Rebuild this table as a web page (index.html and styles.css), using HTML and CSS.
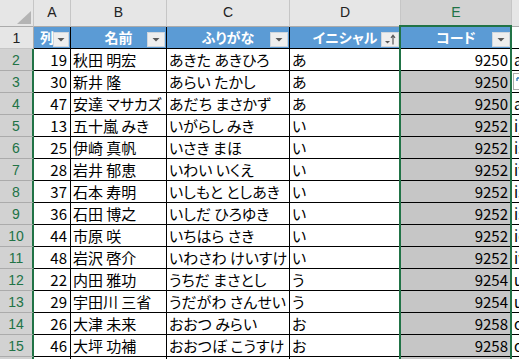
FILE: index.html
```html
<!DOCTYPE html>
<html lang="ja">
<head>
<meta charset="utf-8">
<title>Sheet</title>
<link rel="stylesheet" href="styles.css">
</head>
<body>
<div class="sheet">
  <div class="corner"><span class="tri"></span></div>
  <div class="ch">A</div>
  <div class="ch">B</div>
  <div class="ch">C</div>
  <div class="ch">D</div>
  <div class="ch sel">E</div>
  <div class="ch">F</div>

  <div class="rh">1</div>
  <div class="th th-a">列<span class="fb"><svg width="14" height="15" viewBox="0 0 14 15"><polygon points="3.5,6 10.5,6 7,9.5" fill="#595959"/></svg></span></div>
  <div class="th">名前<span class="fb"><svg width="16" height="15" viewBox="0 0 16 15"><polygon points="4.5,6 11.5,6 8,9.5" fill="#595959"/></svg></span></div>
  <div class="th">ふりがな<span class="fb"><svg width="16" height="15" viewBox="0 0 16 15"><polygon points="4.5,6 11.5,6 8,9.5" fill="#595959"/></svg></span></div>
  <div class="th">イニシャル<span class="fb"><svg width="16" height="15" viewBox="0 0 16 15"><polygon points="3,9 8,9 5.5,11.5" fill="#595959"/><path d="M11 12.5V3.5M9 5.8L11 3.2L13 5.8" stroke="#595959" stroke-width="1.2" fill="none"/></svg></span></div>
  <div class="th">コード<span class="fb"><svg width="16" height="15" viewBox="0 0 16 15"><polygon points="4.5,6 11.5,6 8,9.5" fill="#595959"/></svg></span></div>
  <div class="fx"></div>

  <div class="rh on">2</div><div class="td num">19</div><div class="td">秋田 明宏</div><div class="td">あきた あきひろ</div><div class="td">あ</div><div class="td num act">9250</div><div class="fx">a</div>
  <div class="rh on">3</div><div class="td num">30</div><div class="td">新井 隆</div><div class="td">あらい たかし</div><div class="td">あ</div><div class="td num hl">9250</div><div class="fx"><span class="ff"><svg width="8" height="16" viewBox="0 0 8 16"><path d="M3 4H7M3 4V7" stroke="#2e75b6" stroke-width="1.3" fill="none"/></svg></span></div>
  <div class="rh on">4</div><div class="td num">47</div><div class="td">安達 マサカズ</div><div class="td">あだち まさかず</div><div class="td">あ</div><div class="td num hl">9250</div><div class="fx">a</div>
  <div class="rh on">5</div><div class="td num">13</div><div class="td">五十嵐 みき</div><div class="td">いがらし みき</div><div class="td">い</div><div class="td num hl">9252</div><div class="fx">ig</div>
  <div class="rh on">6</div><div class="td num">25</div><div class="td">伊崎 真帆</div><div class="td">いさき まほ</div><div class="td">い</div><div class="td num hl">9252</div><div class="fx">is</div>
  <div class="rh on">7</div><div class="td num">28</div><div class="td">岩井 郁恵</div><div class="td">いわい いくえ</div><div class="td">い</div><div class="td num hl">9252</div><div class="fx">iw</div>
  <div class="rh on">8</div><div class="td num">37</div><div class="td">石本 寿明</div><div class="td">いしもと としあき</div><div class="td">い</div><div class="td num hl">9252</div><div class="fx">is</div>
  <div class="rh on">9</div><div class="td num">36</div><div class="td">石田 博之</div><div class="td">いしだ ひろゆき</div><div class="td">い</div><div class="td num hl">9252</div><div class="fx">is</div>
  <div class="rh on">10</div><div class="td num">44</div><div class="td">市原 咲</div><div class="td">いちはら さき</div><div class="td">い</div><div class="td num hl">9252</div><div class="fx">ic</div>
  <div class="rh on">11</div><div class="td num">48</div><div class="td">岩沢 啓介</div><div class="td">いわさわ けいすけ</div><div class="td">い</div><div class="td num hl">9252</div><div class="fx">iw</div>
  <div class="rh on">12</div><div class="td num">22</div><div class="td">内田 雅功</div><div class="td">うちだ まさとし</div><div class="td">う</div><div class="td num hl">9254</div><div class="fx">u</div>
  <div class="rh on">13</div><div class="td num">29</div><div class="td">宇田川 三省</div><div class="td">うだがわ さんせい</div><div class="td">う</div><div class="td num hl">9254</div><div class="fx">u</div>
  <div class="rh on">14</div><div class="td num">26</div><div class="td">大津 未来</div><div class="td">おおつ みらい</div><div class="td">お</div><div class="td num hl">9258</div><div class="fx">o</div>
  <div class="rh on">15</div><div class="td num">46</div><div class="td">大坪 功補</div><div class="td">おおつぼ こうすけ</div><div class="td">お</div><div class="td num hl">9258</div><div class="fx">o</div>
  <div class="rh on">16</div><div class="td num"></div><div class="td"></div><div class="td"></div><div class="td"></div><div class="td num hl"></div><div class="fx"></div>

  <div class="selbox"></div>
</div>
</body>
</html>
```

FILE: styles.css
```css
html, body {
  margin: 0;
  padding: 0;
  background: #ffffff;
  overflow: hidden;
}

.sheet {
  position: relative;
  display: grid;
  grid-template-columns: 34px 37px 96px 123px 111px 111px 60px;
  grid-template-rows: 27px repeat(16, 22px);
  font-family: "Noto Sans CJK JP", "Noto Sans", sans-serif;
  font-feature-settings: "palt";
  width: 572px;
}

.corner {
  position: relative;
  background: #e6e6e6;
  border-right: 1px solid #c6c6c6;
  border-bottom: 1px solid #ababab;
  box-sizing: border-box;
}

.corner .tri {
  position: absolute;
  right: 2px;
  bottom: 2px;
  width: 0;
  height: 0;
  border-left: 14px solid transparent;
  border-bottom: 13px solid #b4b4b4;
}

.ch {
  background: #e6e6e6;
  border-right: 1px solid #c6c6c6;
  border-bottom: 1px solid #ababab;
  box-sizing: border-box;
  display: flex;
  align-items: center;
  justify-content: center;
  font-family: "Liberation Sans", "Noto Sans", sans-serif;
  font-size: 14px;
  color: #222222;
  padding-bottom: 2px;
}

.ch.sel {
  background: #d2d2d2;
  color: #217346;
}

.rh {
  background: #e6e6e6;
  border-right: 1px solid #ababab;
  border-bottom: 1px solid #c6c6c6;
  box-sizing: border-box;
  display: flex;
  align-items: center;
  justify-content: center;
  font-family: "Liberation Sans", "Noto Sans", sans-serif;
  font-size: 14px;
  color: #222222;
}

.rh.on {
  background: #d2d2d2;
  color: #217346;
  border-right: 2px solid #217346;
  border-bottom: 1px solid #ababab;
}

.th {
  position: relative;
  background: #5b9bd5;
  color: #ffffff;
  font-weight: bold;
  font-size: 14px;
  border-right: 1px solid #000000;
  border-bottom: 1px solid #000000;
  box-sizing: border-box;
  display: flex;
  align-items: center;
  justify-content: center;
  padding-bottom: 2px;
}

.th-a {
  justify-content: flex-start;
  padding-left: 6px;
}

.fb {
  position: absolute;
  right: 1px;
  bottom: 1px;
  height: 15px;
  background: #eeeeee;
  border: 1px solid #cfd6dd;
  box-sizing: border-box;
  display: flex;
  align-items: center;
  justify-content: center;
}

.fb svg {
  display: block;
}

.td {
  background: #ffffff;
  color: #000000;
  font-size: 15px;
  border-right: 1px solid #000000;
  border-bottom: 1px solid #000000;
  box-sizing: border-box;
  display: flex;
  align-items: flex-end;
  justify-content: flex-start;
  padding: 0 1px 1px 2px;
  line-height: 19px;
  white-space: nowrap;
  overflow: hidden;
}

.td.num {
  justify-content: flex-end;
  padding-right: 3px;
}

.td.hl {
  background: #c6c6c6;
}

.td.act {
  background: #ffffff;
}

.fx {
  position: relative;
  background: #ffffff;
  color: #000000;
  font-size: 15px;
  border-bottom: 1px solid #000000;
  box-sizing: border-box;
  display: flex;
  align-items: flex-end;
  padding: 0 2px 1px 2px;
  line-height: 19px;
  white-space: nowrap;
}

.ff {
  position: absolute;
  left: 1px;
  top: 2px;
  width: 14px;
  height: 17px;
  background: #ffffff;
  border: 1px solid #ababab;
  box-sizing: border-box;
}

.ff svg {
  display: block;
}

.selbox {
  position: absolute;
  left: 399px;
  top: 25px;
  width: 113px;
  height: 400px;
  border: 2px solid #217346;
  box-sizing: border-box;
  pointer-events: none;
}
```
